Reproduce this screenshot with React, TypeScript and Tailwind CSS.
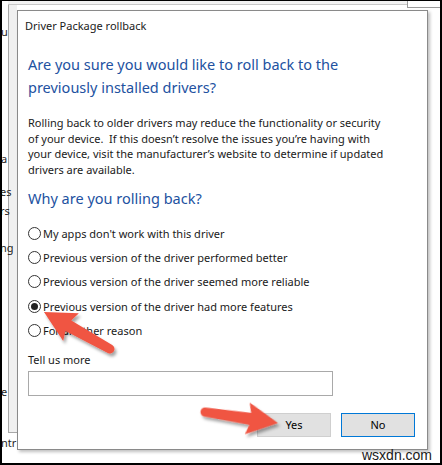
import React from 'react';

const reasons = [
  "My apps don't work with this driver",
  'Previous version of the driver performed better',
  'Previous version of the driver seemed more reliable',
  'Previous version of the driver had more features',
  'For another reason',
];

// left-hand bits of the window behind the dialog
const fragments = [
  { text: 'u', cls: 'top-[24px] left-[1px]' },
  { text: 'a', cls: 'top-[151px] left-[1px]' },
  { text: 'es', cls: 'top-[184px] left-[0px]' },
  { text: 'rs', cls: 'top-[203px] left-[0px]' },
  { text: 'ng', cls: 'top-[240px] left-[0px]' },
  { text: 'e', cls: 'top-[384px] left-[1px]' },
  { text: 'ntr', cls: 'top-[435px] left-[1px]' },
];

const arrowPath = (L: number, H: number, hw: number) =>
  `M0 -4.5 L${L - H} -6 L${L - H - 3} -${hw} L${L} 0 L${L - H - 3} ${hw} L${L - H} 6 L0 4.5 A4.5 4.5 0 0 1 0 -4.5 Z`;

const Arrows = () => (
  <svg className="absolute left-0 top-0 pointer-events-none" width="442" height="465" viewBox="0 0 442 465">
    <defs>
      <filter id="arrowShadow" x="-20%" y="-20%" width="140%" height="140%">
        <feDropShadow dx="2" dy="3" stdDeviation="1.6" floodColor="#000" floodOpacity="0.35" />
      </filter>
    </defs>
    <g filter="url(#arrowShadow)">
      <path transform="translate(110 349) rotate(209.3)" d={arrowPath(75.7, 28, 16)} fill="#f05442" />
      <path transform="translate(205 412) rotate(8.6)" d={arrowPath(73.8, 28, 16)} fill="#f05442" />
    </g>
  </svg>
);

const Radio = ({ label, checked }: { label: string; checked?: boolean }) => (
  <div className="flex items-center h-[24.4px] gap-[2px]">
    <span className="w-[13px] h-[13px] rounded-full border border-[#333] bg-white flex items-center justify-center shrink-0">
      {checked && <span className="w-[7px] h-[7px] rounded-full bg-[#222]" />}
    </span>
    <span className="text-[11px] leading-[15px] text-[#1a1a1a] whitespace-nowrap">{label}</span>
  </div>
);

const App = () => {
  return (
    <div className="relative w-[442px] h-[465px] bg-white overflow-hidden pl-[17px] pt-[10px] font-['Noto_Sans',sans-serif]">
      {/* window behind */}
      <div className="absolute left-[8px] top-[1px] w-[400px] h-[4px] bg-[#f2f2f2] border-b border-[#c8c8c8]" />
      <div className="absolute left-[407px] top-0 w-[35px] h-[8px] border-l border-b border-[#9a9a9a]" />
      <div className="absolute left-[8px] top-[5px] w-[9px] h-[428px] bg-[#f0f0f0] border-l border-b border-[#a8a8a8]" />
      {fragments.map((f) => (
        <span key={f.text} className={`absolute ${f.cls} text-[11px] leading-[15px] text-[#1e1e1e] whitespace-nowrap`}>
          {f.text}
        </span>
      ))}

      {/* dialog */}
      <div className="relative w-[411px] h-[440px] border border-[#8a8a8a] bg-white shadow-[2px_2px_3px_rgba(0,0,0,0.25)] flex flex-col">
        <p className="pl-[7px] pt-[7px] text-[11px] leading-[15px] text-[#1a1a1a]">Driver Package rollback</p>

        <div className="pl-[10px] flex flex-col">
          <h1 className="mt-[20px] text-[14.5px] leading-[23px] text-[#22519f]">
            Are you sure you would like to roll back to the
            <br />
            previously installed drivers?
          </h1>

          <p className="mt-[16px] text-[11px] leading-[15.7px] text-[#1a1a1a] whitespace-nowrap">
            Rolling back to older drivers may reduce the functionality or security
            <br />
            of your device.&nbsp; If this doesn’t resolve the issues you’re having with
            <br />
            your device, visit the manufacturer’s website to determine if updated
            <br />
            drivers are available.
          </p>

          <h2 className="mt-[9px] text-[14.5px] leading-[23px] text-[#22519f]">Why are you rolling back?</h2>

          <div className="mt-[11px] flex flex-col">
            {reasons.map((r, i) => (
              <Radio key={r} label={r} checked={i === 3} />
            ))}
          </div>

          <p className="mt-[9px] text-[11px] leading-[15px] text-[#1a1a1a]">Tell us more</p>
          <div className="mt-[4px] w-[305px] h-[25px] border border-[#a9a9a9] bg-white" />

          <div className="mt-[17px] pr-[12px] flex justify-end gap-[10px]">
            <button className="w-[74px] h-[24px] bg-[#e1e1e1] border border-[#cfcfcf] text-[11px] text-black">Yes</button>
            <button className="w-[74px] h-[24px] bg-[#e1e1e1] border border-[#0078d7] text-[11px] text-black">No</button>
          </div>
        </div>
      </div>

      <span className="absolute left-[362px] top-[447px] font-['Liberation_Sans',sans-serif] text-[14px] leading-[16px] text-[#1a1a1a]">
        wsxdn.com
      </span>

      <Arrows />

      {/* outer frame */}
      <div className="absolute inset-0 border-2 border-t border-black pointer-events-none" />
    </div>
  );
};

export default App;
